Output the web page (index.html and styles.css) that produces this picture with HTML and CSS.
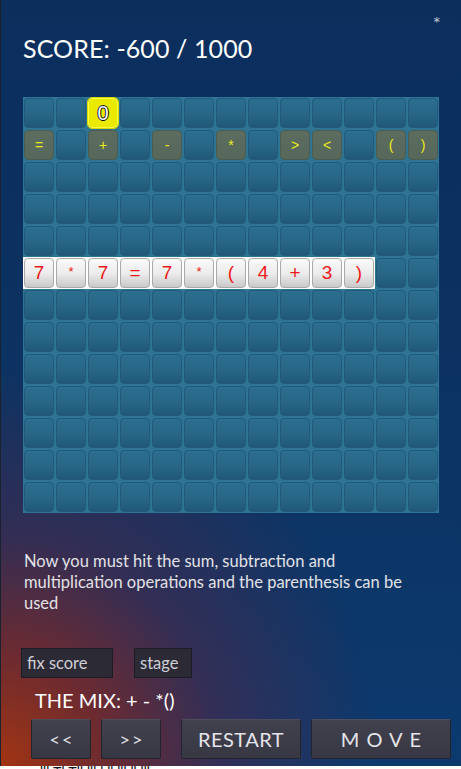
FILE: index.html
```html
<!DOCTYPE html>
<html>
<head>
<meta charset="utf-8">
<link rel="stylesheet" href="styles.css">
</head>
<body>
<div class="app">
  <span class="star">*</span>
  <h1 class="score">SCORE: -600 / 1000</h1>
  <div class="board">
    <div class="band"></div>
  </div>
  <p class="info">Now you must hit the sum, subtraction and multiplication operations and the parenthesis can be used</p>
  <div class="fields">
    <div class="field f-score">fix score</div>
    <div class="field f-stage">stage</div>
  </div>
  <div class="mix">THE MIX: + - *()</div>
  <div class="buttons">
    <button class="btn b-nav">&lt;&lt;</button>
    <button class="btn b-nav">&gt;&gt;</button>
    <button class="btn b-restart">RESTART</button>
    <button class="btn b-move">MOVE</button>
  </div>
</div>
<div class="footer">lll Tl Tll lll l ll lll ll lll</div>
<script>
  var board = document.querySelector('.board');
  var special = {
    '0,2': ['yellow', '0'],
    '1,0': ['op', '='], '1,2': ['op', '+'], '1,4': ['op', '-'], '1,6': ['op', '*'],
    '1,8': ['op', '>'], '1,9': ['op', '<'], '1,11': ['op', '('], '1,12': ['op', ')']
  };
  var eq = ['7','*','7','=','7','*','(','4','+','3',')'];
  for (var r = 0; r < 13; r++) {
    for (var c = 0; c < 13; c++) {
      var d = document.createElement('div');
      d.className = 'tile';
      d.style.gridRow = (r + 1);
      d.style.gridColumn = (c + 1);
      var key = r + ',' + c;
      if (special[key]) {
        d.className += ' ' + special[key][0];
        d.textContent = special[key][1];
      } else if (r === 5 && c < 11) {
        d.className += ' eq';
        d.textContent = eq[c];
        if (eq[c] === '*') d.className += ' small';
      }
      board.appendChild(d);
    }
  }
</script>
</body>
</html>
```
FILE: styles.css
```css
html, body {
  margin: 0;
  padding: 0;
  background: #ffffff;
}
body {
  width: 461px;
  overflow: hidden;
  font-family: Lato, "Open Sans", sans-serif;
}
.app {
  position: relative;
  height: 766px;
  box-sizing: border-box;
  padding: 33px 0 0 23px;
  background:
    radial-gradient(ellipse 380px 400px at 0% 100%, rgba(170,52,14,0.95) 0%, rgba(125,40,38,0.85) 28%, rgba(75,40,72,0.6) 58%, rgba(20,50,100,0) 100%),
    linear-gradient(180deg, #0b2e5d 0%, #0c3464 60%, #0c3a6f 100%);
  color: #fff;
  box-shadow: inset 1px 0 0 #1a2230;
}
.star {
  position: absolute;
  top: 14px;
  right: 21px;
  font-size: 13px;
  color: #c8ccd6;
  font-family: "DejaVu Sans", sans-serif;
}
.score {
  margin: 0;
  font-weight: 400;
  font-size: 25px;
  line-height: 30px;
  height: 64px;
  letter-spacing: 0.1px;
}
.board {
  width: 416px;
  height: 416px;
  box-sizing: border-box;
  padding: 1px;
  display: grid;
  grid-template-columns: repeat(13, 30px);
  grid-template-rows: repeat(13, 30px);
  gap: 2px;
  background: #2e7595;
}
.band {
  grid-row: 6;
  grid-column: 1 / 12;
  margin: -1px;
  background: #ffffff;
  z-index: 0;
}
.tile {
  position: relative;
  z-index: 1;
  box-sizing: border-box;
  border-radius: 4px;
  border: 1px solid #23597a;
  background: linear-gradient(180deg, #2b6e8e 0%, #286686 55%, #21587a 100%);
  display: flex;
  align-items: center;
  justify-content: center;
  font-family: "Liberation Sans", Arial, sans-serif;
}
.tile.op {
  background: linear-gradient(180deg, #5c6d60 0%, #56675b 100%);
  border-color: #4b5c52;
  color: #ecec1a;
  font-size: 14px;
}
.tile.yellow {
  background: #eaea00;
  border: 1px solid #fbfb40;
  outline: 1px solid #d6d600;
  color: #ffffff;
  font-size: 20px;
  text-shadow: -1px 0 #111, 1px 0 #111, 0 -1px #111, 0 1px #111;
}
.tile.eq {
  background: linear-gradient(180deg, #fafafa 0%, #ececec 50%, #c9c9c9 100%);
  border-color: #a9a9a9;
  color: #f01818;
  font-size: 19px;
}
.tile.eq.small {
  font-size: 13px;
  padding-bottom: 4px;
}
.info {
  margin: 38px 0 0 1px;
  width: 392px;
  font-size: 16.5px;
  line-height: 21px;
  color: #e2e2e6;
}
.fields {
  margin-top: 34px;
  margin-left: -2px;
  display: flex;
  gap: 21px;
}
.field {
  box-sizing: border-box;
  height: 30px;
  background: #2b2a35;
  border: 1px solid #1c1c24;
  color: #cfcfd6;
  font-size: 16.5px;
  line-height: 28px;
  padding-left: 5px;
}
.f-score { width: 92px; }
.f-stage { width: 58px; }
.mix {
  margin: 10px 0 0 12px;
  font-size: 20px;
  line-height: 24px;
  height: 24px;
}
.buttons {
  margin: 7px 0 0 8px;
  display: flex;
  gap: 10px;
}
.btn {
  box-sizing: border-box;
  height: 40px;
  border: 1px solid #24242e;
  border-top-color: #4c4c5a;
  border-radius: 2px;
  background: linear-gradient(180deg, #41404e 0%, #383844 100%);
  color: #e4e4ea;
  font-family: Lato, "Open Sans", sans-serif;
  padding: 0;
}
.b-nav {
  width: 60px;
  font-size: 18px;
  letter-spacing: 2px;
  padding-left: 2px;
}
.b-restart {
  width: 120px;
  margin-left: 10px;
  font-size: 20px;
  letter-spacing: 0.5px;
}
.b-move {
  width: 140px;
  font-size: 20px;
  letter-spacing: 7px;
  padding-left: 7px;
}
.footer {
  margin-top: -2px;
  font-family: "Liberation Sans", sans-serif;
  font-size: 14px;
  color: #111;
  padding-left: 40px;
}
```
